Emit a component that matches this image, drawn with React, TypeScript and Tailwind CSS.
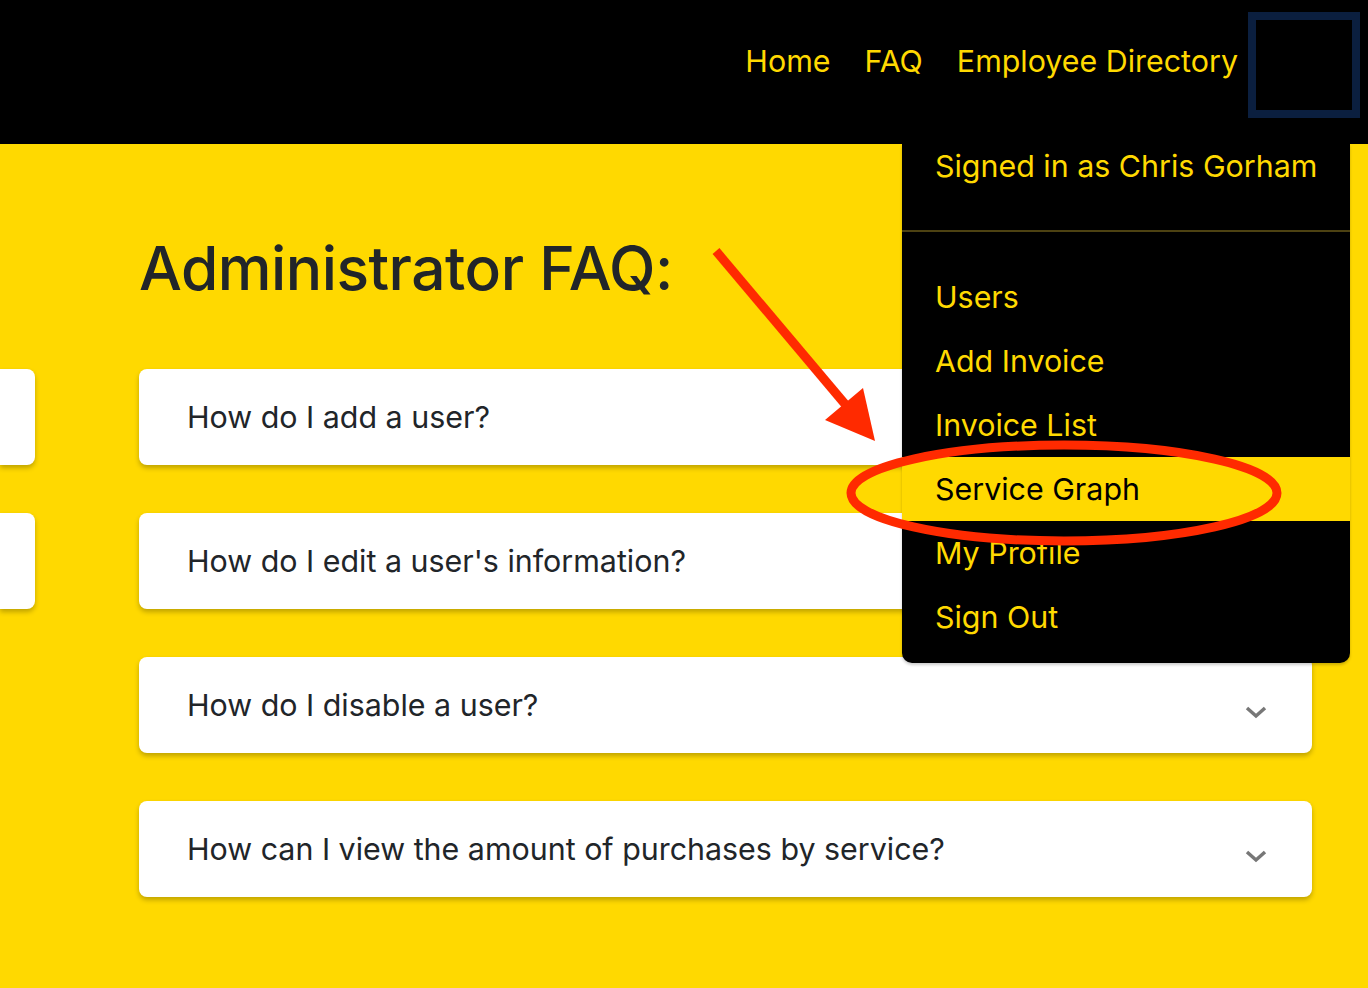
const questions = [
  "How do I add a user?",
  "How do I edit a user's information?",
  "How do I disable a user?",
  "How can I view the amount of purchases by service?",
];

const menuItems = ["Users", "Add Invoice", "Invoice List", "Service Graph", "My Profile", "Sign Out"];

export default function App() {
  return (
    <div
      className="relative min-h-[988px] overflow-hidden bg-[#FFD900]"
      style={{ fontFamily: "Inter, 'Noto Sans', sans-serif" }}
    >
      {/* Navbar */}
      <nav className="flex h-[144px] items-start justify-end bg-black pr-[8px] pt-[12px]">
        <div className="mt-[34px] flex items-center gap-[34px] text-[30.4px] leading-none text-[#FFD900]">
          <a>Home</a>
          <a>FAQ</a>
          <a>Employee Directory</a>
        </div>
        <div className="ml-[10px] h-[106px] w-[112px] border-[8px] border-[#0b1f3f]" />
      </nav>

      {/* Content */}
      <div className="flex">
        <div className="flex w-[35px] flex-col gap-[48px] pt-[225px]">
          <div className="h-[96px] rounded-r-[8px] bg-white shadow-[0_3px_5px_rgba(0,0,0,0.25)]" />
          <div className="h-[96px] rounded-r-[8px] bg-white shadow-[0_3px_5px_rgba(0,0,0,0.25)]" />
        </div>
        <main className="ml-[104px] w-[1173px]">
          <h1 className="mt-[94px] text-[60.5px] font-medium leading-none tracking-[-0.5px] text-[#212529]">
            Administrator FAQ:
          </h1>
          <div className="mt-[70px] flex flex-col gap-[48px]">
            {questions.map((q) => (
              <div
                key={q}
                className="flex h-[96px] items-center justify-between rounded-[8px] bg-white pl-[48px] pr-[45px] shadow-[0_3px_5px_rgba(0,0,0,0.25)]"
              >
                <span className="mt-[3px] text-[30.4px] text-[#212529]">{q}</span>
                <svg className="mt-[14px]" width="22" height="14" viewBox="0 0 22 14">
                  <polyline points="2,3 11,11 20,3" fill="none" stroke="#777777" strokeWidth="3.5" />
                </svg>
              </div>
            ))}
          </div>
        </main>
      </div>

      {/* Dropdown menu */}
      <div className="absolute left-[902px] top-[144px] w-[448px] rounded-b-[10px] bg-black pb-[14px] shadow-[0_2px_3px_rgba(0,0,0,0.2)]">
        <div className="flex h-[55px] items-start pl-[33px] text-[30.4px] leading-none text-[#FFD900]">
          <span className="-mt-[5px] pt-[12px]">Signed in as Chris Gorham</span>
        </div>
        <div className="mt-[31px] h-[2px] bg-[#4d4212]" />
        <div className="mt-[33px] flex flex-col">
          {menuItems.map((m) => (
            <div
              key={m}
              className={
                m === "Service Graph"
                  ? "flex h-[64px] items-center bg-[#FFD900] pl-[33px] pt-[2px] text-[30.4px] text-black"
                  : "flex h-[64px] items-center pl-[33px] pt-[2px] text-[30.4px] text-[#FFD900]"
              }
            >
              {m}
            </div>
          ))}
        </div>
      </div>

      {/* Annotation overlay */}
      <svg className="pointer-events-none absolute left-0 top-0" width="1368" height="988">
        <line x1="716" y1="251" x2="850" y2="410" stroke="#FF2A00" strokeWidth="9" />
        <polygon points="875,441 825,420 863,388" fill="#FF2A00" />
        <ellipse cx="1064" cy="493" rx="213" ry="48" fill="none" stroke="#FF2A00" strokeWidth="9" />
      </svg>
    </div>
  );
}
